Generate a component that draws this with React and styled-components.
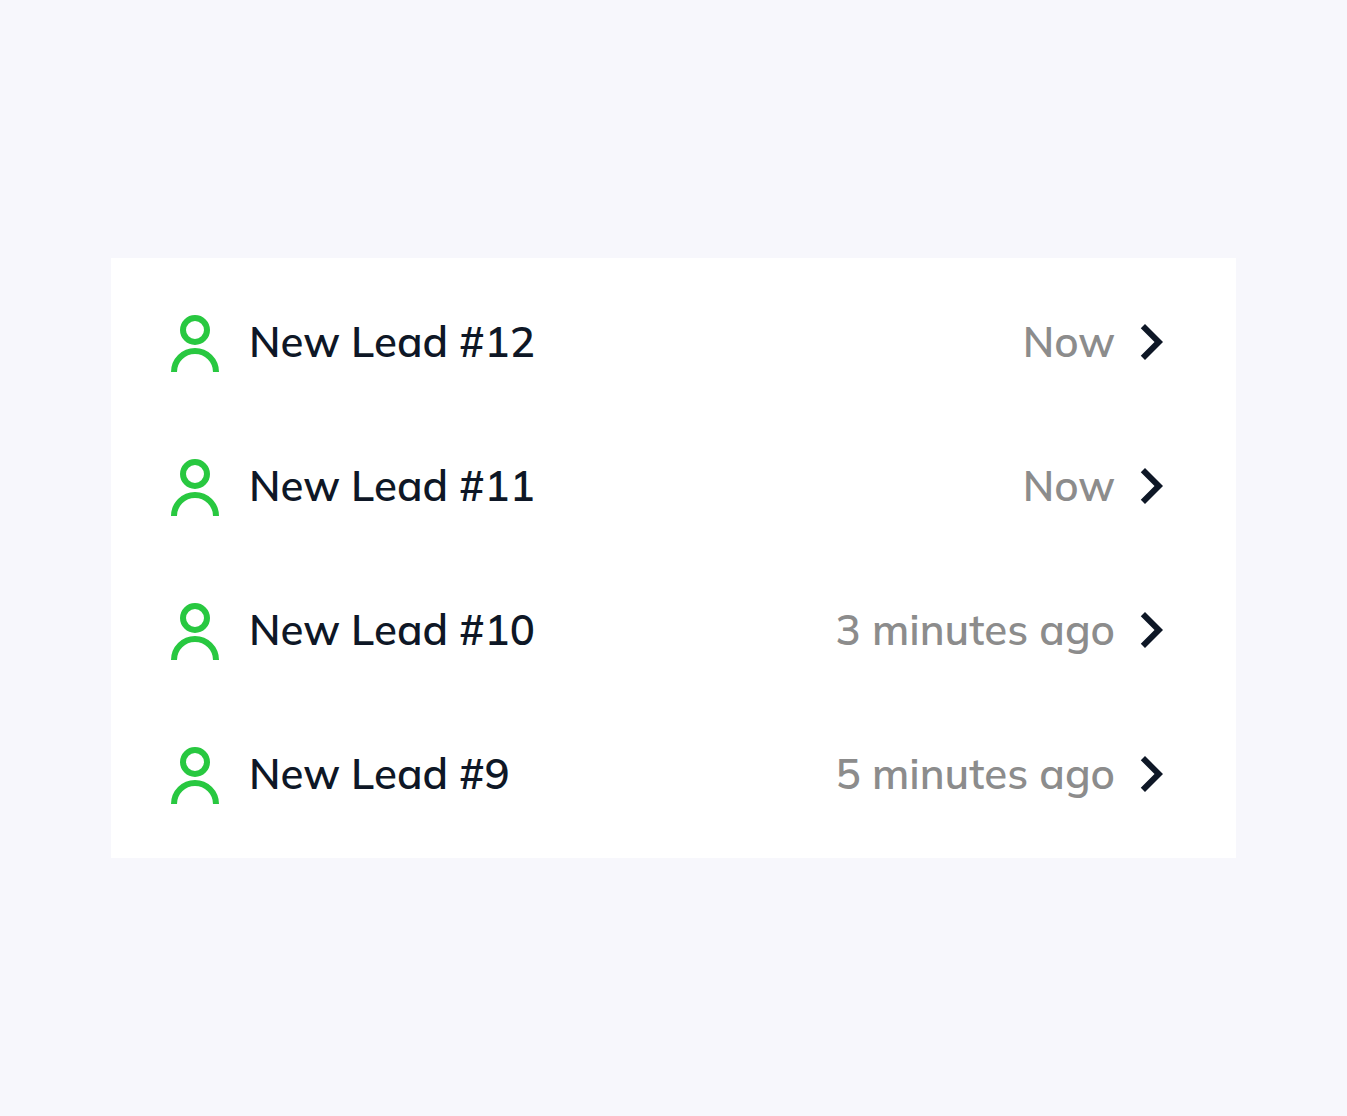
import React from 'react'
import styled, { createGlobalStyle } from 'styled-components'

const leads = [
  { id: 12, time: 'Now' },
  { id: 11, time: 'Now' },
  { id: 10, time: '3 minutes ago' },
  { id: 9, time: '5 minutes ago' },
]

const UserIcon = () => (
  <Icon viewBox="0 0 24 24" aria-hidden="true">
    <g fill="none" stroke="#28c840" strokeWidth="2">
      <circle cx="12" cy="8" r="4" />
      <path d="M5 22a7 7 0 0 1 14 0" />
    </g>
  </Icon>
)

const ChevronIcon = () => (
  <Icon viewBox="0 0 24 24" aria-hidden="true">
    <path fill="#0e1726" d="M10 6L8.59 7.41 13.17 12l-4.58 4.59L10 18l6-6z" />
  </Icon>
)

const App = () => {
  return (
    <>
      <GlobalStyle />
      <Page>
        <LeadList>
          {leads.map((lead) => (
            <li key={lead.id}>
              <LeadLink href={`#lead-${lead.id}`}>
                <UserIcon />
                <LeadName>New Lead #{lead.id}</LeadName>
                <LeadTime>{lead.time}</LeadTime>
                <ChevronIcon />
              </LeadLink>
            </li>
          ))}
        </LeadList>
      </Page>
    </>
  )
}

const GlobalStyle = createGlobalStyle`
  * {
    box-sizing: border-box;
  }

  body {
    margin: 0;
    background: #f7f7fc;
    font-family: Mulish, "Open Sans", "Noto Sans", sans-serif;
  }
`;

const Page = styled.main`
  min-height: 100vh;
  padding: 24px 111px;
  display: flex;
  align-items: center;
`;

const LeadList = styled.ul`
  flex: 1;
  margin: 0;
  padding: 12px 49px 12px 48px;
  list-style: none;
  background: #ffffff;
`;

const LeadLink = styled.a`
  display: flex;
  align-items: center;
  padding: 36px 0;
  font-size: 42px;
  line-height: 72px;
  font-weight: 600;
  color: #0e1726;
  text-decoration: none;
`;

const LeadName = styled.span`
  flex: 1;
  padding-left: 18px;
`;

const LeadTime = styled.span`
  color: #8c8c8c;
`;

const Icon = styled.svg`
  flex: none;
  width: 72px;
  height: 72px;
`;

export default App
